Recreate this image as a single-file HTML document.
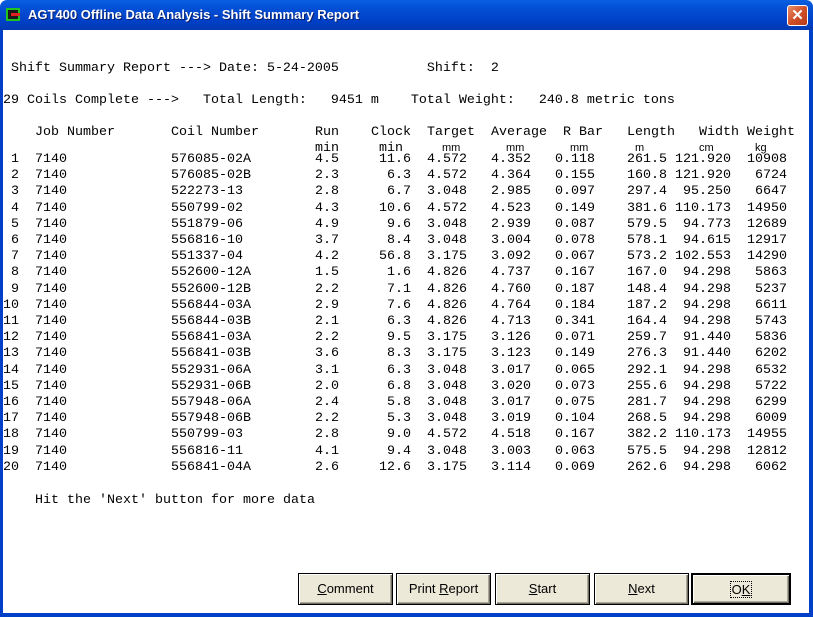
<!DOCTYPE html>
<html><head><meta charset="utf-8">
<style>
*{margin:0;padding:0;box-sizing:border-box}
body{width:813px;height:617px;overflow:hidden;background:#fff;position:relative;font-family:"Liberation Mono",monospace;font-size:13.33px;color:#000}
.tb{position:absolute;left:0;top:0;width:813px;height:30px;background:linear-gradient(#0a5fe0,#0453d8 20%,#0040c8 70%,#0039b0);border-radius:7px 7px 0 0}
.tt{position:absolute;left:28px;top:7px;color:#fff;font:bold 13px "Liberation Sans",sans-serif;text-shadow:1px 1px #0a1f6a}
.ic{position:absolute;left:6px;top:8px;width:14px;height:13px;background:#1a1a1a;border:2px solid #1fc41f}
.ic:after{content:"";position:absolute;left:3px;top:3px;width:9px;height:3px;background:#e02020}
.cl{position:absolute;left:787px;top:5px;width:21px;height:21px;border-radius:3px;border:1px solid #fff;background:linear-gradient(135deg,#e8906a,#d0502a 50%,#b83a18);color:#fff;font:bold 15px "Liberation Sans",sans-serif;text-align:center;line-height:19px}
.bl{position:absolute;background:#0040c8}
.l{position:absolute;white-space:pre;line-height:16px;height:16px}
.r{position:absolute;left:0;width:813px;height:16px;line-height:16px}
.r span{position:absolute;top:0;white-space:pre}
.n{left:3px;width:16px;text-align:right}
.j{left:35px}
.c{left:171px}
.ru{left:315px;width:24px;text-align:right}
.ck{left:371px;width:40px;text-align:right}
.tg{left:427px}
.av{left:491px}
.rb{left:555px}
.ln{left:619px;width:48px;text-align:right}
.wd{left:667px;width:64px;text-align:right}
.wt{left:739px;width:48px;text-align:right}
.u{position:absolute;top:142px;font:11px "Liberation Sans",sans-serif}
.btn{position:absolute;top:573px;height:32px;background:#ece9d8;border:1px solid #000;box-shadow:inset 1px 1px #fff,inset -1px -1px #716f64,inset -2px -2px #aca899;font:13px "Liberation Sans",sans-serif;text-align:center;line-height:30px}
</style></head><body>
<div class="tb"><div class="ic"></div><div class="tt">AGT400 Offline Data Analysis - Shift Summary Report</div><div class="cl">✕</div></div>
<div class="bl" style="left:0;top:30px;width:3px;height:587px"></div>
<div class="bl" style="left:809px;top:30px;width:4px;height:587px"></div>
<div class="bl" style="left:0;top:613px;width:813px;height:4px"></div>

<div class="l" style="left:3px;top:61px"> Shift Summary Report ---&gt; Date: 5-24-2005           Shift:  2</div>
<div class="l" style="left:3px;top:93px">29 Coils Complete ---&gt;   Total Length:   9451 m    Total Weight:   240.8 metric tons</div>

<div class="r" style="top:125px"><span class="j">Job Number</span><span class="c">Coil Number</span><span style="left:315px">Run</span><span style="left:371px">Clock</span><span style="left:427px">Target</span><span style="left:491px">Average</span><span style="left:563px">R Bar</span><span style="left:627px">Length</span><span style="left:699px">Width</span><span style="left:747px">Weight</span></div>
<div class="r" style="top:141px"><span style="left:315px">min</span><span style="left:379px">min</span></div>
<div class="u" style="left:442px">mm</div><div class="u" style="left:506px">mm</div><div class="u" style="left:570px">mm</div><div class="u" style="left:635px">m</div><div class="u" style="left:699px">cm</div><div class="u" style="left:755px">kg</div>

<div class="r" style="top:152px"><span class="n">1</span><span class="j">7140</span><span class="c">576085-02A</span><span class="ru">4.5</span><span class="ck">11.6</span><span class="tg">4.572</span><span class="av">4.352</span><span class="rb">0.118</span><span class="ln">261.5</span><span class="wd">121.920</span><span class="wt">10908</span></div>
<div class="r" style="top:168px"><span class="n">2</span><span class="j">7140</span><span class="c">576085-02B</span><span class="ru">2.3</span><span class="ck">6.3</span><span class="tg">4.572</span><span class="av">4.364</span><span class="rb">0.155</span><span class="ln">160.8</span><span class="wd">121.920</span><span class="wt">6724</span></div>
<div class="r" style="top:184px"><span class="n">3</span><span class="j">7140</span><span class="c">522273-13</span><span class="ru">2.8</span><span class="ck">6.7</span><span class="tg">3.048</span><span class="av">2.985</span><span class="rb">0.097</span><span class="ln">297.4</span><span class="wd">95.250</span><span class="wt">6647</span></div>
<div class="r" style="top:201px"><span class="n">4</span><span class="j">7140</span><span class="c">550799-02</span><span class="ru">4.3</span><span class="ck">10.6</span><span class="tg">4.572</span><span class="av">4.523</span><span class="rb">0.149</span><span class="ln">381.6</span><span class="wd">110.173</span><span class="wt">14950</span></div>
<div class="r" style="top:217px"><span class="n">5</span><span class="j">7140</span><span class="c">551879-06</span><span class="ru">4.9</span><span class="ck">9.6</span><span class="tg">3.048</span><span class="av">2.939</span><span class="rb">0.087</span><span class="ln">579.5</span><span class="wd">94.773</span><span class="wt">12689</span></div>
<div class="r" style="top:233px"><span class="n">6</span><span class="j">7140</span><span class="c">556816-10</span><span class="ru">3.7</span><span class="ck">8.4</span><span class="tg">3.048</span><span class="av">3.004</span><span class="rb">0.078</span><span class="ln">578.1</span><span class="wd">94.615</span><span class="wt">12917</span></div>
<div class="r" style="top:249px"><span class="n">7</span><span class="j">7140</span><span class="c">551337-04</span><span class="ru">4.2</span><span class="ck">56.8</span><span class="tg">3.175</span><span class="av">3.092</span><span class="rb">0.067</span><span class="ln">573.2</span><span class="wd">102.553</span><span class="wt">14290</span></div>
<div class="r" style="top:265px"><span class="n">8</span><span class="j">7140</span><span class="c">552600-12A</span><span class="ru">1.5</span><span class="ck">1.6</span><span class="tg">4.826</span><span class="av">4.737</span><span class="rb">0.167</span><span class="ln">167.0</span><span class="wd">94.298</span><span class="wt">5863</span></div>
<div class="r" style="top:282px"><span class="n">9</span><span class="j">7140</span><span class="c">552600-12B</span><span class="ru">2.2</span><span class="ck">7.1</span><span class="tg">4.826</span><span class="av">4.760</span><span class="rb">0.187</span><span class="ln">148.4</span><span class="wd">94.298</span><span class="wt">5237</span></div>
<div class="r" style="top:298px"><span class="n">10</span><span class="j">7140</span><span class="c">556844-03A</span><span class="ru">2.9</span><span class="ck">7.6</span><span class="tg">4.826</span><span class="av">4.764</span><span class="rb">0.184</span><span class="ln">187.2</span><span class="wd">94.298</span><span class="wt">6611</span></div>
<div class="r" style="top:314px"><span class="n">11</span><span class="j">7140</span><span class="c">556844-03B</span><span class="ru">2.1</span><span class="ck">6.3</span><span class="tg">4.826</span><span class="av">4.713</span><span class="rb">0.341</span><span class="ln">164.4</span><span class="wd">94.298</span><span class="wt">5743</span></div>
<div class="r" style="top:330px"><span class="n">12</span><span class="j">7140</span><span class="c">556841-03A</span><span class="ru">2.2</span><span class="ck">9.5</span><span class="tg">3.175</span><span class="av">3.126</span><span class="rb">0.071</span><span class="ln">259.7</span><span class="wd">91.440</span><span class="wt">5836</span></div>
<div class="r" style="top:346px"><span class="n">13</span><span class="j">7140</span><span class="c">556841-03B</span><span class="ru">3.6</span><span class="ck">8.3</span><span class="tg">3.175</span><span class="av">3.123</span><span class="rb">0.149</span><span class="ln">276.3</span><span class="wd">91.440</span><span class="wt">6202</span></div>
<div class="r" style="top:363px"><span class="n">14</span><span class="j">7140</span><span class="c">552931-06A</span><span class="ru">3.1</span><span class="ck">6.3</span><span class="tg">3.048</span><span class="av">3.017</span><span class="rb">0.065</span><span class="ln">292.1</span><span class="wd">94.298</span><span class="wt">6532</span></div>
<div class="r" style="top:379px"><span class="n">15</span><span class="j">7140</span><span class="c">552931-06B</span><span class="ru">2.0</span><span class="ck">6.8</span><span class="tg">3.048</span><span class="av">3.020</span><span class="rb">0.073</span><span class="ln">255.6</span><span class="wd">94.298</span><span class="wt">5722</span></div>
<div class="r" style="top:395px"><span class="n">16</span><span class="j">7140</span><span class="c">557948-06A</span><span class="ru">2.4</span><span class="ck">5.8</span><span class="tg">3.048</span><span class="av">3.017</span><span class="rb">0.075</span><span class="ln">281.7</span><span class="wd">94.298</span><span class="wt">6299</span></div>
<div class="r" style="top:411px"><span class="n">17</span><span class="j">7140</span><span class="c">557948-06B</span><span class="ru">2.2</span><span class="ck">5.3</span><span class="tg">3.048</span><span class="av">3.019</span><span class="rb">0.104</span><span class="ln">268.5</span><span class="wd">94.298</span><span class="wt">6009</span></div>
<div class="r" style="top:427px"><span class="n">18</span><span class="j">7140</span><span class="c">550799-03</span><span class="ru">2.8</span><span class="ck">9.0</span><span class="tg">4.572</span><span class="av">4.518</span><span class="rb">0.167</span><span class="ln">382.2</span><span class="wd">110.173</span><span class="wt">14955</span></div>
<div class="r" style="top:444px"><span class="n">19</span><span class="j">7140</span><span class="c">556816-11</span><span class="ru">4.1</span><span class="ck">9.4</span><span class="tg">3.048</span><span class="av">3.003</span><span class="rb">0.063</span><span class="ln">575.5</span><span class="wd">94.298</span><span class="wt">12812</span></div>
<div class="r" style="top:460px"><span class="n">20</span><span class="j">7140</span><span class="c">556841-04A</span><span class="ru">2.6</span><span class="ck">12.6</span><span class="tg">3.175</span><span class="av">3.114</span><span class="rb">0.069</span><span class="ln">262.6</span><span class="wd">94.298</span><span class="wt">6062</span></div>

<div class="l" style="left:35px;top:493px">Hit the 'Next' button for more data</div>

<div class="btn" style="left:298px;width:95px"><u>C</u>omment</div>
<div class="btn" style="left:396px;width:95px">Print <u>R</u>eport</div>
<div class="btn" style="left:495px;width:95px"><u>S</u>tart</div>
<div class="btn" style="left:594px;width:95px"><u>N</u>ext</div>
<div class="btn" style="left:691px;width:100px;border:2px solid #000"><span style="border:1px dotted #000;padding:0 1px">O<u>K</u></span></div>
</body></html>
